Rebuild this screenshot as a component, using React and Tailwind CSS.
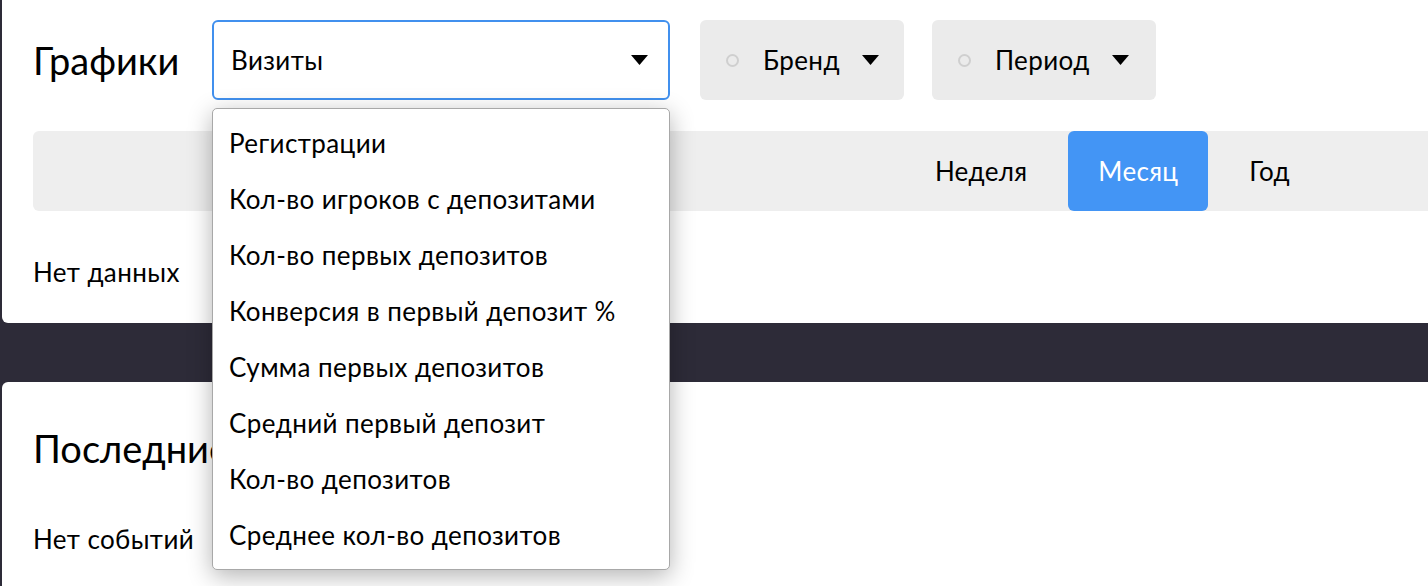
import { useState } from 'react';

const metrics = [
    'Регистрации',
    'Кол-во игроков с депозитами',
    'Кол-во первых депозитов',
    'Конверсия в первый депозит %',
    'Сумма первых депозитов',
    'Средний первый депозит',
    'Кол-во депозитов',
    'Среднее кол-во депозитов',
];

const periods = ['Неделя', 'Месяц', 'Год'];

function Caret() {
    return (
        <svg width="17" height="10" viewBox="0 0 17 10" className="shrink-0">
            <path d="M0 0 H17 L8.5 10 Z" fill="#000" />
        </svg>
    );
}

function FilterButton({ label, width }) {
    return (
        <button className={`flex items-center h-[80px] ${width} pl-[26px] rounded-[6px] bg-[#ebebeb] text-[26px] tracking-[0.4px] text-black`}>
            <span className="w-[13px] h-[13px] rounded-full border-2 border-[#cfcfcf] shrink-0" />
            <span className="ml-[24px] mr-[22px]">{label}</span>
            <Caret />
        </button>
    );
}

export default function App() {
    const [period, setPeriod] = useState('Месяц');
    const [metric] = useState('Визиты');

    return (
        <div className="h-[586px] overflow-hidden bg-[#2d2b38] pl-[2px] font-['Lato','Noto_Sans',sans-serif] text-black">
            {/* Charts card */}
            <div className="bg-white h-[323px] rounded-bl-[6px] pl-[31px] pt-[20px]">
                <div className="flex items-center">
                    <h2 className="text-[38px] leading-none w-[179px]">Графики</h2>
                    <div className="relative">
                        <div className="flex items-center justify-between w-[458px] h-[80px] border-2 border-[#4190ee] rounded-[6px] pl-[17px] pr-[20px] text-[26px] tracking-[0.4px]">
                            <span>{metric}</span>
                            <Caret />
                        </div>
                        {/* open dropdown */}
                        <div className="absolute z-10 left-0 top-[88px] w-[458px] bg-white border border-[#a8a8a8] rounded-[5px] py-[6px] shadow-[0_6px_24px_rgba(0,0,0,0.3)]">
                            {metrics.map((m) => (
                                <div key={m} className="h-[56px] flex items-center px-[16px] text-[26px] tracking-[0.4px]">
                                    {m}
                                </div>
                            ))}
                        </div>
                    </div>
                    <div className="flex gap-[28px] ml-[30px]">
                        <FilterButton label="Бренд" width="w-[204px]" />
                        <FilterButton label="Период" width="w-[224px]" />
                    </div>
                </div>

                <div className="mt-[31px] flex items-center justify-end h-[80px] bg-[#eeeeee] rounded-l-[6px] pr-[108px] gap-[11px]">
                    {periods.map((p) => (
                        <button
                            key={p}
                            onClick={() => setPeriod(p)}
                            className={`h-[80px] px-[30px] rounded-[6px] text-[26px] tracking-[0.3px] ${period === p ? 'bg-[#4395f5] text-white' : 'text-black'}`}
                        >
                            {p}
                        </button>
                    ))}
                </div>

                <p className="mt-[42px] text-[26px] tracking-[0.4px]">Нет данных</p>
            </div>

            <div className="h-[59px]" />

            {/* Recent events card */}
            <div className="bg-white h-[300px] rounded-tl-[6px] pl-[31px] pt-[47px]">
                <h2 className="text-[38px] leading-none">Последние события</h2>
                <p className="mt-[53px] text-[26px] tracking-[0.4px]">Нет событий</p>
            </div>
        </div>
    );
}
